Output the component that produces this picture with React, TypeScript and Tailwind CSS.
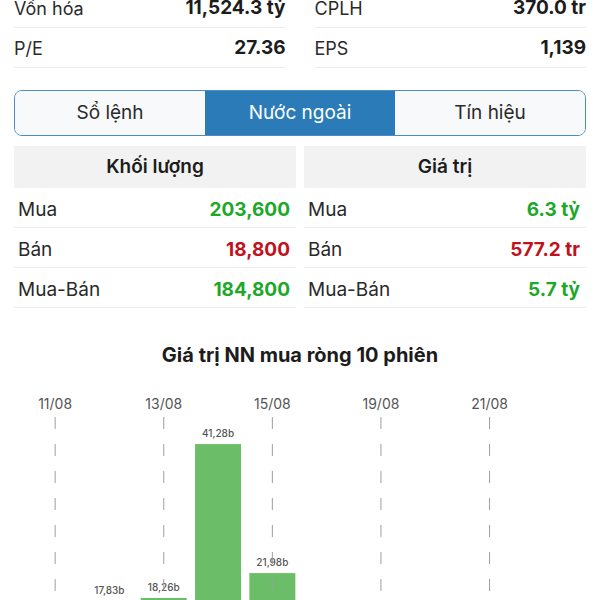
import React from "react";

const stats = [
  [
    { label: "Vốn hóa", value: "11,524.3 tỷ" },
    { label: "P/E", value: "27.36" },
  ],
  [
    { label: "CPLH", value: "370.0 tr" },
    { label: "EPS", value: "1,139" },
  ],
];

const tabs = ["Sổ lệnh", "Nước ngoài", "Tín hiệu"];

type Row = { label: string; value: string; tone: "up" | "down" };

const volume: Row[] = [
  { label: "Mua", value: "203,600", tone: "up" },
  { label: "Bán", value: "18,800", tone: "down" },
  { label: "Mua-Bán", value: "184,800", tone: "up" },
];

const amount: Row[] = [
  { label: "Mua", value: "6.3 tỷ", tone: "up" },
  { label: "Bán", value: "577.2 tr", tone: "down" },
  { label: "Mua-Bán", value: "5.7 tỷ", tone: "up" },
];

const sessions = [
  { date: "11/08", value: 6.12 },
  { date: "12/08", value: 17.83 },
  { date: "13/08", value: 18.26 },
  { date: "14/08", value: 41.28 },
  { date: "15/08", value: 21.98 },
  { date: "18/08", value: 9.4 },
  { date: "19/08", value: 4.75 },
  { date: "20/08", value: 7.3 },
  { date: "21/08", value: 3.1 },
  { date: "22/08", value: 5.6 },
];

function FlowTable({ title, rows }: { title: string; rows: Row[] }) {
  return (
    <div className="flex-1">
      <div className="h-[42px] bg-[#f2f2f2] flex items-center justify-center text-[19px] font-semibold text-[#1c1c1c]">
        {title}
      </div>
      {rows.map((r) => (
        <div
          key={r.label}
          className="h-[40px] flex items-center justify-between pt-[5px] pl-[4px] pr-[6px] border-b border-[#ececec] text-[19px]"
        >
          <span className="text-[#2a2a2a]">{r.label}</span>
          <span
            className={
              r.tone === "up"
                ? "font-bold text-[#1ca828]"
                : "font-bold text-[#c0111d]"
            }
          >
            {r.value}
          </span>
        </div>
      ))}
    </div>
  );
}

function NetChart() {
  const slot = 54.3;
  const left = 28;
  const base = 720;
  const scale = 6.684;
  return (
    <svg width={600} height={340} viewBox="0 380 600 340" className="block">
      {sessions.map((s, i) => {
        const cx = left + slot * (i + 0.5);
        const top = base - s.value * scale;
        return (
          <g key={s.date}>
            <rect x={cx - 23} y={top} width={46} height={base - top} fill="#6cbd68" />
            <text
              x={cx}
              y={top - 7}
              textAnchor="middle"
              fontSize={10}
              fontWeight={500}
              fill="#555"
            >
              {s.value.toFixed(2).replace(".", ",")}b
            </text>
          </g>
        );
      })}
      {sessions.map((s, i) =>
        i % 2 === 0 ? (
          <g key={"d" + s.date}>
            <text x={left + slot * (i + 0.5)} y={409} textAnchor="middle" fontSize={14} fill="#555">
              {s.date}
            </text>
            <line
              x1={left + slot * (i + 0.5)}
              x2={left + slot * (i + 0.5)}
              y1={417}
              y2={base}
              stroke="#9e9e9e"
              strokeWidth={1}
              strokeDasharray="12 15"
            />
          </g>
        ) : null
      )}
    </svg>
  );
}

export default function App() {
  return (
    <div className="w-[600px] h-[600px] overflow-hidden bg-white font-['Inter','Liberation_Sans',sans-serif]">
      <div className="grid grid-cols-2 gap-x-[29px] px-[14px] -mt-[12px]">
        {stats.map((col, ci) => (
          <div key={ci}>
            {col.map((s) => (
              <div
                key={s.label}
                className="h-[40px] flex items-center justify-between pt-[2px] border-b border-[#ececec] text-[18px]"
              >
                <span className="text-[#2a2a2a]">{s.label}</span>
                <span className="text-[19px] font-bold text-[#1c1c1c]">{s.value}</span>
              </div>
            ))}
          </div>
        ))}
      </div>

      <div className="mx-[14px] mt-[22px] h-[46px] flex rounded-[8px] border-[1.5px] border-[#4b8cc2] overflow-hidden">
        {tabs.map((t, i) => (
          <div
            key={t}
            className={
              i === 1
                ? "flex-1 flex items-center justify-center bg-[#2a7bb8] text-white text-[19px]"
                : "flex-1 flex items-center justify-center bg-[#f7f9fb] text-[#2a2a2a] text-[19px]"
            }
          >
            {t}
          </div>
        ))}
      </div>

      <div className="flex gap-[8px] mx-[14px] mt-[10px]">
        <FlowTable title="Khối lượng" rows={volume} />
        <FlowTable title="Giá trị" rows={amount} />
      </div>

      <div className="mt-[35px] h-[24px] flex items-center justify-center text-[20px] font-bold text-[#1c1c1c]">
        Giá trị NN mua ròng 10 phiên
      </div>
      <div className="mt-[13px]">
        <NetChart />
      </div>
    </div>
  );
}
